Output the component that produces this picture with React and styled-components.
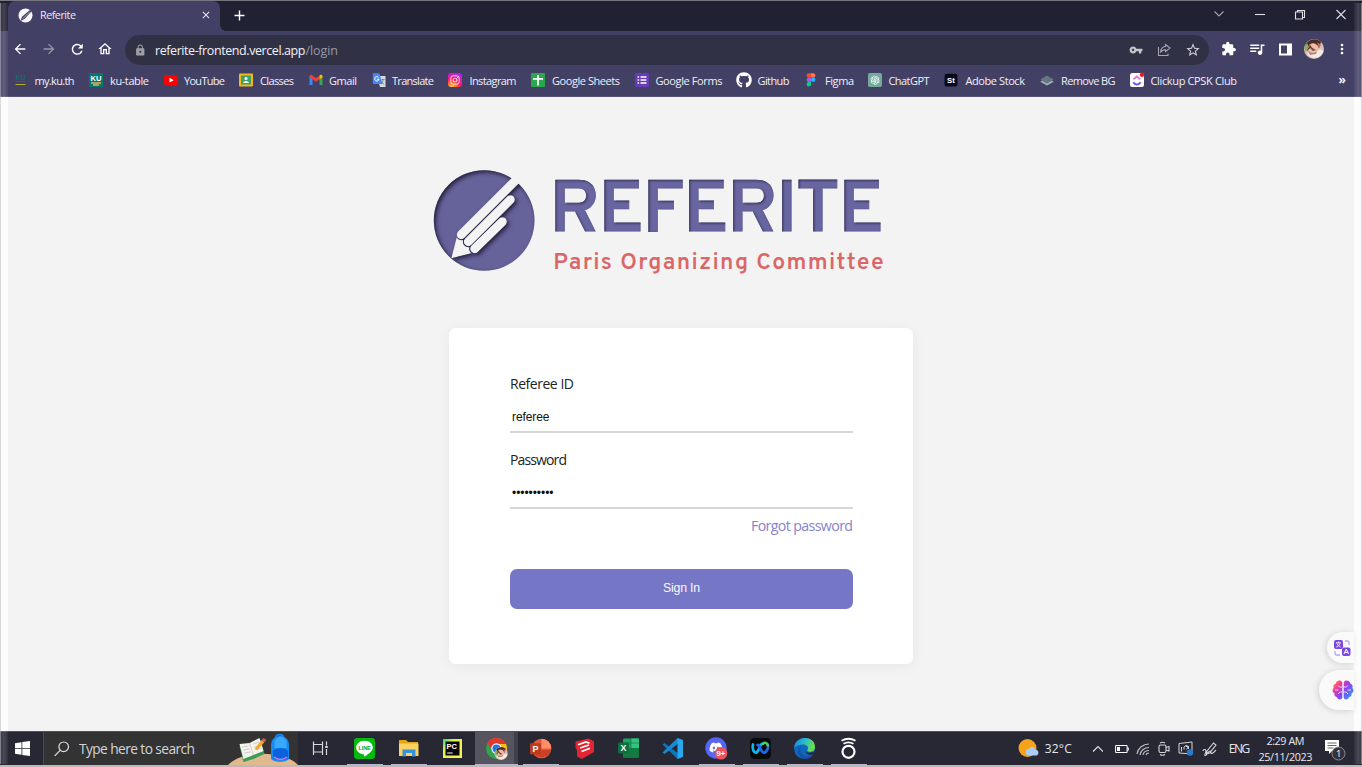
import React, { useLayoutEffect, useRef, useState } from "react";
import styled, { createGlobalStyle } from "styled-components";
import {
  MdArrowBack, MdArrowForward, MdRefresh, MdOutlineHome, MdLock, MdVpnKey,
  MdStarBorder, MdExtension, MdQueueMusic, MdMoreVert, MdClose, MdAdd,
} from "react-icons/md";
import { FaGithub, FaDiscord, FaInstagram } from "react-icons/fa";
import { AiOutlineOpenAI } from "react-icons/ai";

const GlobalStyle = createGlobalStyle`
  * { box-sizing: border-box; }
  html, body { margin: 0; padding: 0; overflow: hidden; }
  svg { display: block; flex: none; }
`;

const ui = `"Open Sans", "Noto Sans", sans-serif`;
const arial = `"Liberation Sans", Arial, sans-serif`;

/* Text whose tracking is adjusted so that it fills a given width. */
const FitBox = styled.span`
  display: inline-block;
  white-space: pre;
  width: ${(p) => p.$w}px;
  flex: none;
`;
function Fit({ w, children }) {
  const ref = useRef(null);
  const [tracking, setTracking] = useState(0);
  useLayoutEffect(() => {
    const natural = ref.current.getBoundingClientRect().width;
    setTracking((w - natural) / (String(children).length - 1));
  }, [w, children]);
  return (
    <FitBox $w={w}>
      <span ref={ref} style={{ letterSpacing: `${tracking}px` }}>{children}</span>
    </FitBox>
  );
}

/* ---------- window ---------- */
const Screen = styled.div`
  position: relative;
  width: 1362px;
  height: 767px;
  display: flex;
  flex-direction: column;
  overflow: hidden;
  font-family: ${ui};
  background: #f3f3f3;
  border-top: 1px solid #77767f;
`;
const Edge = styled.div`
  position: absolute;
  top: 2px;
  bottom: 3px;
  width: 8px;
  ${(p) => (p.$right ? "right: 0;" : "left: 0;")}
  background: linear-gradient(${(p) => (p.$right ? "90deg" : "270deg")},
    rgba(255,255,255,.04), rgba(255,255,255,.16) 55%, rgba(255,255,255,.08) 80%, rgba(190,190,198,.8) 100%);
`;
const PageEdge = styled.div`
  width: 8px;
  height: 100%;
  flex: none;
  background: #fdfdfd;
`;

/* ---------- title bar ---------- */
const TitleBar = styled.div`
  height: 30px;
  flex: none;
  display: flex;
  align-items: center;
  background: #212134;
  padding-left: 8px;
`;
const Tab = styled.div`
  position: relative;
  width: 212px;
  height: 30px;
  padding: 0 8px 2px 10px;
  display: flex;
  align-items: center;
  border-radius: 7px 7px 0 0;
  background: #434066;
  color: #e9e9f2;
  font-size: 10.8px;
  &::after {
    content: "";
    position: absolute;
    right: -6px;
    bottom: 0;
    width: 6px;
    height: 6px;
    background: radial-gradient(circle at 100% 0, transparent 5.6px, #434066 6px);
  }
  > span { margin-left: 7px; margin-right: auto; padding-bottom: 2px; }
`;
const NewTab = styled.div`
  margin-left: 11px;
  margin-bottom: 2px;
  width: 17px;
  color: #fff;
`;
const WindowControls = styled.div`
  margin-left: auto;
  margin-bottom: 4px;
  display: flex;
  svg { width: 41px; height: 14px; fill: none; stroke: #dedee4; stroke-width: 1.1; }
`;

/* ---------- toolbar ---------- */
const Toolbar = styled.div`
  height: 36px;
  flex: none;
  display: flex;
  align-items: center;
  padding-left: 6px;
  background: #434066;
  color: #fff;
`;
const NavButton = styled.span`
  width: 28.4px;
  display: flex;
  justify-content: center;
  opacity: ${(p) => (p.$dim ? 0.45 : 1)};
`;
const AddressBar = styled.div`
  width: 1084px;
  height: 30px;
  margin-left: 5.4px;
  margin-top: 2px;
  border-radius: 15px;
  background: #313146;
  display: flex;
  align-items: center;
  padding: 0 2px 0 9px;
  font-size: 12.5px;
  color: #f2f2f5;
  > svg { margin-right: 8.5px; color: #9d9da8; }
`;
const Path = styled.span`
  color: #9797a6;
  margin-right: auto;
`;
const ActionSlot = styled.span`
  width: 28.4px;
  display: flex;
  justify-content: center;
  color: ${(p) => p.$c || "#fff"};
`;
const Actions = styled.div`
  display: flex;
  align-items: center;
  margin-left: 5.5px;
`;

/* ---------- bookmarks ---------- */
const BookmarkBar = styled.div`
  height: 30px;
  flex: none;
  display: flex;
  align-items: center;
  padding: 0 0 3px 12px;
  background: #434066;
  border-bottom: 1px solid #56547a;
  color: #f0f0f6;
  font-size: 11px;
`;
const Bookmark = styled.div`
  width: ${(p) => p.$w}px;
  flex: none;
  display: flex;
  align-items: center;
`;
const BookmarkIcon = styled.span`
  width: ${(p) => p.$w}px;
  flex: none;
  svg { width: 16px; height: 16px; }
`;
const More = styled.span`
  margin-left: auto;
  margin-right: 16px;
  padding-bottom: 1px;
  font-size: 12px;
  font-weight: 700;
  line-height: 14px;
`;

/* ---------- login page ---------- */
const PageArea = styled.main`
  height: 634px;
  flex: none;
  display: flex;
  background: #f3f3f3;
`;
const Content = styled.div`
  position: relative;
  flex: 1;
  display: flex;
  flex-direction: column;
  padding: 58px 0 0 412px;
`;
const Card = styled.section`
  width: 464px;
  height: 336px;
  margin: 43px 0 0 29px;
  padding: 46px 60px 0 61px;
  border-radius: 7px;
  background: #fff;
  box-shadow: 0 2px 14px rgba(0, 0, 0, 0.05);
  display: flex;
  flex-direction: column;
`;
const Field = styled.div`
  height: 76px;
  flex: none;
  font-size: 14px;
  line-height: 20px;
  color: #222;
`;
const Value = styled.div`
  height: 39px;
  border-bottom: 2px solid #d6d6d6;
  padding: ${(p) => (p.$secret ? 11.5 : 12)}px 0 0 2px;
  font: 12px/22px ${arial};
  color: #111;
`;
const Forgot = styled.a`
  align-self: flex-end;
  font-size: 14.2px;
  line-height: 20px;
  margin-top: -10px;
  color: #8583cd;
`;
const SignIn = styled.button`
  height: 40px;
  flex: none;
  margin-top: 33px;
  padding: 0 0 2px;
  border: 0;
  border-radius: 7px;
  background: #7676c7;
  color: #f8f8ff;
  font: 12.3px ${arial};
`;
const Floating = styled.div`
  position: absolute;
  right: 0;
  bottom: ${(p) => p.$bottom}px;
  width: ${(p) => p.$w}px;
  height: ${(p) => p.$h}px;
  padding-left: ${(p) => p.$pad}px;
  border-radius: 20px 0 0 20px;
  background: #fafafa;
  box-shadow: -1px 1px 6px rgba(0, 0, 0, 0.14);
  display: flex;
  align-items: center;
`;

/* ---------- taskbar ---------- */
const Taskbar = styled.footer`
  height: 36px;
  flex: none;
  display: flex;
  background: #282734;
  border-top: 1px solid #50505b;
  border-bottom: 2px solid #b9b9be;
  color: #e7e7ea;
`;
const Start = styled.div`
  width: 43px;
  flex: none;
  padding-left: 15px;
  display: flex;
  align-items: center;
`;
const Search = styled.div`
  width: 255px;
  flex: none;
  background: #333334;
  border-left: 1px solid #4a4a4c;
  display: flex;
  align-items: center;
  padding-left: 10px;
  font-size: 13.8px;
  color: #d4d4d6;
  > span { margin: 0 auto 0 9px; }
`;
const TaskSlot = styled.div`
  position: relative;
  width: 44px;
  flex: none;
  display: flex;
  align-items: center;
  justify-content: center;
  &::before {
    content: "";
    position: absolute;
    z-index: 0;
    inset: 0 0 0 1px;
    background: ${(p) => (p.$active ? "linear-gradient(90deg, #55545f 39px, #403f4b 39px)" : "none")};
  }
  &::after {
    content: "";
    position: absolute;
    bottom: 0;
    left: ${(p) => (p.$active ? 1 : 5)}px;
    width: ${(p) => (p.$active ? 43 : 36)}px;
    height: 1.5px;
    background: ${(p) => (p.$open ? "#b7b3cb" : "none")};
  }
  svg { position: relative; z-index: 1; }
`;
const Tray = styled.div`
  margin-left: auto;
  width: 344.5px;
  flex: none;
  display: flex;
  align-items: center;
  font-size: 12px;
`;
const TraySlot = styled.span`
  width: ${(p) => p.$w}px;
  flex: none;
  display: flex;
  justify-content: center;
`;
const Clock = styled.div`
  width: 55px;
  flex: none;
  margin-left: -2px;
  display: flex;
  flex-direction: column;
  align-items: center;
  font-size: 10.8px;
  line-height: 16px;
`;

/* ---------- drawings ---------- */
const Favicon = () => (
  <svg width="15" height="15" viewBox="0 0 15 15">
    <circle cx="7.5" cy="7.5" r="7" fill="#f6f6fa" />
    <path d="M12.2 1.8 4 8.7 2.5 13 6.5 11 13.4 3.5z" fill="#434066" />
    <path d="M4.6 10.7 11.8 4" stroke="#b9b8ca" strokeWidth=".8" />
  </svg>
);

const marks = {
  ku: <svg viewBox="0 0 16 16"><text x="3.5" y="7.5" fontFamily="Liberation Sans" fontWeight="700" fontSize="7" fill="#0d6f6b">KU</text><path d="M3.5 9.5h10" stroke="#1f6a5e" /><path d="M3.5 12.500h10" stroke="#b8ac2c" /></svg>,
  kuTable: <svg viewBox="0 0 16 16"><rect x="1" y="1" width="14" height="14" fill="#08766c" /><text x="2.5" y="9" fontFamily="Liberation Sans" fontWeight="700" fontSize="8" textLength="11" lengthAdjust="spacingAndGlyphs" fill="#fff">KU</text><path d="M3 11h10M5 13h6" stroke="#d8b65e" strokeWidth="1.3" /></svg>,
  youtube: <svg viewBox="0 0 16 16"><rect x="1" y="3" width="14" height="10.5" rx="3" fill="#f00" /><path d="m6.5 5.8 4.2 2.4-4.2 2.4z" fill="#fff" /></svg>,
  classes: <svg viewBox="0 0 16 16"><rect x="1" y="1.5" width="14" height="13" rx="1" fill="#f3b91b" /><rect x="3" y="3.500" width="10" height="9" fill="#3fa162" /><circle cx="8" cy="6.500" r="1.500" fill="#fff" /><path d="M5 11c.5-2.800 5.500-2.800 6 0z" fill="#fff" /></svg>,
  gmail: <svg viewBox="0 0 16 16"><path d="M1.5 4v9h3V7z" fill="#4285f4" /><path d="M11.5 7v6h3V4z" fill="#34a853" /><path d="M1.5 4.6C1.5 2.5 3.5 2.4 4.5 3.4L8 6.2l3.5-2.8v3.7L8 9.8 1.5 5z" fill="#ea4335" /><path d="M11.5 3.4c1-1 3-.9 3 1.2v.6l-3 2.2z" fill="#fbbc04" /></svg>,
  translate: <svg viewBox="0 0 16 16"><path d="M6 4h8.5v11H9z" fill="#d7dbdf" /><path d="M1.8 1.3h6.5L11.6 12H1.8z" fill="#4887ee" /><path d="M7.8 5.6a2.2 2.2 0 1 0 .3 1.6H5.9" stroke="#fff" fill="none" /><path d="M10.5 7.5h3m-1.5 0c0 3-1 4-2 4.6m.5-2.6 2.5 3" stroke="#718289" fill="none" strokeWidth=".9" /></svg>,
  instagram: <svg viewBox="0 0 16 16"><defs><radialGradient id="ig" cx=".25" cy="1.05" r="1.1"><stop offset="0" stopColor="#fd5" /><stop offset=".28" stopColor="#ff7b23" /><stop offset=".58" stopColor="#ff176c" /><stop offset="1" stopColor="#ad24f2" /></radialGradient></defs><rect x="1" y="1" width="14" height="14" rx="3.2" fill="url(#ig)" /><FaInstagram x="2.8" y="2.8" style={{ width: 10.4, height: 10.4 }} color="#fff" /></svg>,
  sheets: <svg viewBox="0 0 16 16"><rect x="1" y="1" width="14" height="14" rx="1" fill="#29a84c" /><path d="M8 3v10.5M3 6.8h10" stroke="#fff" strokeWidth="1.7" /></svg>,
  forms: <svg viewBox="0 0 16 16"><rect x="1" y="1" width="14" height="14" rx="1" fill="#673ab7" /><path d="M6.500 5h6M6.500 8h6M6.500 11h6M3.600 5h1.500M3.600 8h1.500M3.600 11h1.500" stroke="#fff" strokeWidth="1.5" /></svg>,
  github: <FaGithub color="#fff" />,
  figma: <svg viewBox="0 0 16 16"><path d="M8 1.2H5.8a2.2 2.2 0 0 0 0 4.4H8z" fill="#f24e1e" /><path d="M8 1.2h2.2a2.2 2.2 0 0 1 0 4.4H8z" fill="#ff7262" /><path d="M8 5.6H5.8a2.2 2.2 0 0 0 0 4.4H8z" fill="#a259ff" /><circle cx="10.2" cy="7.8" r="2.2" fill="#1abcfe" /><path d="M8 10H5.8A2.2 2.2 0 1 0 8 12.4z" fill="#0acf83" /></svg>,
  chatgpt: <svg viewBox="0 0 16 16"><rect x="1" y="1" width="14" height="14" rx="1.8" fill="#75a99b" /><AiOutlineOpenAI x="2.2" y="2.2" style={{ width: 11.6, height: 11.6 }} color="#fff" /></svg>,
  stock: <svg viewBox="0 0 16 16"><rect x="1.5" y="1.8" width="13" height="12.8" rx="2.2" fill="#070b1e" /><text x="4" y="11" fontFamily="Liberation Sans" fontWeight="700" fontSize="7.8" fill="#fff">St</text></svg>,
  removeBg: <svg viewBox="0 0 16 16"><path d="m1.3 9.700 6.700 3.800 6.700-3.800-2-1.200L8 11.200 3.300 8.500z" fill="#a8b2b5" /><path d="m1.300 7.600 6.700-4 6.700 4-6.700 4z" fill="#64777d" /></svg>,
  clickup: <svg viewBox="0 0 16 16"><rect x="1" y="1" width="14" height="14" rx="2.500" fill="#fff" /><path d="m4.500 7.400 3.300-3 3.300 3" stroke="#e96bd0" fill="none" strokeWidth="1.800" /><path d="M4.200 10.200c2 3 5.400 3 7.400 0" stroke="#615cfa" fill="none" strokeWidth="2" /><circle cx="13" cy="2.800" r="2.200" fill="#f21a13" /></svg>,
};

/* label, icon, item width, text offset, text width */
const bookmarks = [
  ["my.ku.th", "ku", 76, 22.5, 40], ["ku-table", "kuTable", 75, 22, 39],
  ["YouTube", "youtube", 75, 21, 41], ["Classes", "classes", 70, 22, 34],
  ["Gmail", "gmail", 62.5, 21, 28], ["Translate", "translate", 76.5, 21.5, 42],
  ["Instagram", "instagram", 83, 22.5, 47], ["Google Sheets", "sheets", 103.5, 22, 68],
  ["Google Forms", "forms", 102, 22, 67], ["Github", "github", 67.5, 22, 32],
  ["Figma", "figma", 64, 22, 29], ["ChatGPT", "chatgpt", 76, 21.5, 41],
  ["Adobe Stock", "stock", 96, 22.5, 59.5], ["Remove BG", "removeBg", 90, 22, 54.5],
  ["Clickup CPSK Club", "clickup", 112, 21.5, 86.5],
];

const Portrait = ({ x = 0, y = 0, r = 10 }) => (
  <g transform={`translate(${x} ${y}) scale(${r / 10})`}>
    <circle cx="10" cy="10" r="10" fill="#dcbfb4" />
    <path d="M1.5 5.5A10 10 0 0 1 17 3l-2 6-4-2-4 1-4 4z" fill="#4b2a25" />
    <path d="M.2 9 3 4l2 4-3 5z" fill="#8fae5d" />
    <path d="M5 6c3-3 7-2 9 1s-1 5-3 5-5-2-6-6z" fill="#efbba5" />
    <path d="M6 5c1 3 3 5 6 6l-3 1-4-4z" fill="#7b4436" />
    <path d="M3 15c4-4 9 0 13-5l3.500 2c-2 7-11 10-16.500 3z" fill="#f4e9e4" />
    <path d="M4 12c4 2 6 2 9 0l-1 3-6 1z" fill="#b9806f" />
    <path d="m13 3 4 3-2 3z" fill="#c96a66" />
  </g>
);

const Logo = () => (
  <svg width="480" height="130" viewBox="0 0 480 130">
    <defs>
      <filter id="inset" x="-5%" y="-5%" width="110%" height="110%" colorInterpolationFilters="sRGB">
        <feComponentTransfer in="SourceAlpha" result="inverse"><feFuncA type="linear" slope="-1" intercept="1" /></feComponentTransfer>
        <feOffset in="inverse" dx="1.1" dy="1.3" />
        <feGaussianBlur stdDeviation="1" result="soft" />
        <feFlood floodColor="#1c1a38" floodOpacity=".75" />
        <feComposite in2="soft" operator="in" />
        <feComposite in2="SourceAlpha" operator="in" result="shade" />
        <feMerge><feMergeNode in="SourceGraphic" /><feMergeNode in="shade" /></feMerge>
      </filter>
      <filter id="insetDeep" x="-5%" y="-5%" width="110%" height="110%" colorInterpolationFilters="sRGB">
        <feComponentTransfer in="SourceAlpha" result="inverse"><feFuncA type="linear" slope="-1" intercept="1" /></feComponentTransfer>
        <feOffset in="inverse" dx="2" dy="2" />
        <feGaussianBlur stdDeviation="1.900" result="soft" />
        <feFlood floodColor="#15142c" floodOpacity=".85" />
        <feComposite in2="soft" operator="in" />
        <feComposite in2="SourceAlpha" operator="in" result="shade" />
        <feMerge><feMergeNode in="SourceGraphic" /><feMergeNode in="shade" /></feMerge>
      </filter>
      <mask id="pencil" maskUnits="userSpaceOnUse" x="0" y="0" width="400" height="400">
        <rect width="400" height="400" fill="#fff" />
        <path d="M94 310 112 240 166 292z" fill="#000" />
        <g strokeLinecap="round">
          <path d="M164 281 247 200" stroke="#fff" strokeWidth="33" />
          <path d="M145 260 271 134" stroke="#fff" strokeWidth="33" />
          <path d="M124 239 310 53" stroke="#fff" strokeWidth="33" />
          <path d="M164 281 247 200" stroke="#000" strokeWidth="27" />
          <path d="M145 260 271 134" stroke="#000" strokeWidth="27" />
          <path d="M124 239 310 53" stroke="#000" strokeWidth="27" />
        </g>
      </mask>
    </defs>
    <g filter="url(#insetDeep)">
      <g transform="scale(.33333)"><circle cx="192.5" cy="196.5" r="151" fill="#66629a" mask="url(#pencil)" /></g>
    </g>
    <g filter="url(#inset)">
      <text transform="translate(129.3 76.2) scale(1.04 1)" fontFamily="Overpass, Inter, sans-serif" fontWeight="600" fontSize="71.5" textLength="322" lengthAdjust="spacing" fill="#6965a0" stroke="#6965a0" strokeWidth=".8">REFERITE</text>
    </g>
    <text x="133.300" y="113.5" fontFamily="Overpass, Roboto, sans-serif" fontWeight="600" fontSize="23" textLength="330.500" lengthAdjust="spacing" fill="#da6668">Paris Organizing Committee</text>
  </svg>
);

const Brain = () => (
  <svg width="22" height="22" viewBox="0 0 22 22">
    <defs>
      <linearGradient id="brain" x1="0" y1=".1" x2="1" y2=".9">
        <stop stopColor="#ff9a2e" /><stop offset=".25" stopColor="#f03c9c" /><stop offset=".55" stopColor="#8a43f0" /><stop offset="1" stopColor="#24a6ff" />
      </linearGradient>
    </defs>
    <path fill="url(#brain)" d="M10.300 3.200v15.600c-.8 2.200-4.600 2.200-5.200-.600-2.200-.200-3.200-2.200-2.400-3.800C.3 13.500-.2 10.500 1.700 9 .8 7 1.800 5 3.700 4.700 4 1.500 9 .400 10.300 3.200zM11.700 3.200v15.600c.8 2.200 4.600 2.200 5.200-.600 2.200-.200 3.200-2.200 2.400-3.800 2.400-.900 2.900-3.900 1-5.400.9-2-.1-4-2-4.300-.3-3.200-5.300-4.300-6.600-1.500z" />
    <path d="M10 8H7.500L6 6.500M10 13H8l-2 2M3 11h3.500M12 8h2.500L16 6.500M12 13h2l2 2M19 11h-3.500" stroke="#fff" strokeWidth=".9" fill="none" opacity=".85" />
  </svg>
);

const SearchArt = () => (
  <svg width="70" height="33" viewBox="0 0 70 33">
    <path d="M0 33C14 18 56 18 70 33z" fill="#e0b98e" />
    <g transform="translate(1.5 0)">
      <path d="m10 14 10-2 11-4 4 14-11 5-10 3z" fill="#3c9b55" />
      <path d="m10 12 10-1 10-5 4 13-10 4-10 4z" fill="#f5f3ee" />
      <path d="m20 11 4 12M13 15l6-1m-5 4 6-1m-5 4 6-1m3-8 6-2m-5 5 6-2m-5 5 6-2" stroke="#bbb" strokeWidth=".7" />
      <path d="m25 17 7-9 3 2-7 8z" fill="#f7a531" /><path d="m32 8 2-2 3 2-2 2z" fill="#e85450" />
      <path d="M46 6c0-4.500 8-4.500 8 0" stroke="#168af2" strokeWidth="1.6" fill="none" />
      <path d="M41.500 26V13c0-12 18-12 18 0v13c0 5-18 5-18 0z" fill="#168af2" />
      <path d="M45 9c3-6 9-6 12 0v7H45z" fill="#38a9ff" />
      <path d="M43.500 19c4-4 11-4 15 0v7c-4 3-11 3-15 0z" fill="#0a62dd" />
      <path d="M44.500 25c4 3 9 3 13 0" stroke="#d678f0" strokeWidth="1.5" fill="none" />
    </g>
  </svg>
);

const apps = [
  { id: "tasks", art: <g stroke="#d8d8dc" fill="none" strokeWidth="1.2"><path d="M4.500 4.500v3h9v-3M4.500 18v-3h9v3M4.500 7.500v7.500M13.500 7.500v7.500M17.500 4.500v4M17.500 12v6" /><path d="M17.500 9v2" strokeWidth="2.5" /></g> },
  { id: "line", open: true, art: <><rect x="1" y="1" width="21" height="21" rx="3" fill="#06b90e" /><path d="M11.500 3.800c5 0 8.300 2.900 8.300 6.600 0 3.400-3.800 6.200-8 8.900-.6.3-.9.1-.8-.5l.2-1.500c-4.700-.3-8-3.100-8-6.900 0-3.700 3.600-6.600 8.300-6.600z" fill="#fff" /><text x="5.600" y="12.700" fontFamily="Liberation Sans" fontWeight="700" fontSize="5.500" textLength="12" fill="#06a90e">LINE</text></> },
  { id: "files", open: true, art: <><path d="M2 3h7l2 2h10v13H2z" fill="#e7a616" /><path d="M2 6.500h19.500V19H2z" fill="#fbd361" /><path d="M5.500 19.500v-7h13v7h-3.500V16H9v3.500z" fill="#3992dc" /></> },
  { id: "pycharm", art: <><defs><linearGradient id="pc" x2="1" y2="1"><stop stopColor="#1bdd8e" /><stop offset=".3" stopColor="#ddf052" /><stop offset="1" stopColor="#f5f456" /></linearGradient></defs><rect x="2" y="2" width="19" height="19" fill="url(#pc)" /><rect x="4.500" y="4.500" width="14" height="14" fill="#060606" /><text x="5.500" y="11.500" fontFamily="Liberation Sans" fontWeight="700" fontSize="7.500" fill="#fff">PC</text><path d="M6.200 16h5.500" stroke="#fff" /></> },
  { id: "chrome", open: true, active: true, art: <><circle cx="11.500" cy="11.500" r="10.500" fill="#31a350" /><path d="M2.500 6A10.500 10.500 0 0 1 21 7h-9.500z" fill="#e5382d" /><path d="M11.500 7H21a10.500 10.500 0 0 1-9.500 15l4-8z" fill="#fbc01a" /><path d="M2.500 6a10.500 10.500 0 0 1 9-5v8l-4 5z" fill="#e5382d" /><circle cx="11.500" cy="11.500" r="5.200" fill="#fff" /><circle cx="11.500" cy="11.500" r="4" fill="#2274e8" /><Portrait x={9.500} y={9.800} r={6.600} /></> },
  { id: "powerpoint", open: true, art: <><circle cx="12.500" cy="11.500" r="9.800" fill="#e35a38" /><path d="M12.500 1.700a9.800 9.800 0 0 1 9.800 9.800h-9.800z" fill="#ff8f6b" /><path d="M3 13h19a9.800 9.800 0 0 1-19 0z" fill="#cc4026" /><rect x="1" y="6.200" width="11" height="11" rx="1" fill="#bd3b1e" /><text x="3.600" y="15" fontFamily="Liberation Sans" fontWeight="700" fontSize="9" fill="#fff">P</text></> },
  { id: "sketchup", art: <><path d="m2.500 4.500 13-3 5.500 3V15L9 22l-5-2.500V13L2.500 11z" fill="#e32431" /><path d="M5 7.800 13 5l3.500 1.200M7 11l9-3M8.500 14.500l8.500-3.300" stroke="#fff" strokeWidth="1.700" fill="none" /></> },
  { id: "excel", art: <><rect x="6" y="1.500" width="16" height="19" rx="1" fill="#20a366" /><path d="M14 1.500h8v9.500h-8z" fill="#33c481" /><path d="M6 11h16v9.500H6z" fill="#107c41" /><path d="M6 6h16M6 15.500h16M14 1.500v19" stroke="#187746" strokeWidth=".7" /><rect x="1" y="5.500" width="11" height="11" rx="1" fill="#0d703c" /><text x="3.500" y="14.200" fontFamily="Liberation Sans" fontWeight="700" fontSize="8.800" fill="#fff">X</text></> },
  { id: "code", art: <><path d="M1.500 7.500 3.500 6 22 20l-5.500 2z" fill="#0877bf" /><path d="M1.500 15.500 3.500 17 22 3l-5.500-2z" fill="#128bd2" /><path d="m16.500 1 5.500 2.200v16.600L16.500 22z" fill="#29a8ee" /></> },
  { id: "discord", open: true, art: <><circle cx="11" cy="11" r="10.700" fill="#5865f2" /><FaDiscord x="4" y="3.500" width="14" height="14" size={14} color="#fff" /><circle cx="16" cy="16.200" r="6.300" fill="#ed5459" /><text x="11.400" y="19" fontFamily="Liberation Sans" fontWeight="700" fontSize="7.800" fill="#fff">9+</text></> },
  { id: "webex", open: true, art: <><rect x="1" y="1" width="21" height="21" rx="4.500" fill="#080b0b" /><path d="M4 7.500c-1.500 4 1 9 3.500 8 2.700-1 3-8.500 6-8.800" stroke="#12b4ef" fill="none" strokeWidth="2.700" strokeLinecap="round" /><path d="M8.500 8c2-2 3 8 6.500 7.700 3-.2 5-6 3.500-8.500" stroke="#2765ed" fill="none" strokeWidth="2.700" strokeLinecap="round" /><path d="M14 6.800c2-2 4-1 4.800 1.500" stroke="#4ccf60" fill="none" strokeWidth="2.500" strokeLinecap="round" /></> },
  { id: "edge", open: true, art: <><defs><linearGradient id="edge" x2="1" y2=".3"><stop stopColor="#1b7bd0" /><stop offset=".5" stopColor="#27b9d2" /><stop offset="1" stopColor="#69dd52" /></linearGradient></defs><circle cx="11.500" cy="11.500" r="10.500" fill="#0e68bf" /><path d="M1 11C2-2 22-2 22 10c0 5-6 6-8 3.500 3-3.500-1-6.500-5-6-4 .300-7 2-8 3.500z" fill="url(#edge)" /><path d="M8.500 9c-3 4 0 10 5 10 3 0 5-1 6.500-2-2 3-5 5-8.500 5C4 21 3 10.500 8.500 9z" fill="#1553a5" /><path d="M12.500 11.500c-1.500 3 2 5.500 7.500 3.500l2.500 1.500c-5 2.500-11.500 1.500-10-5z" fill="#282734" /></> },
  { id: "cast", open: true, art: <g fill="none" stroke="#fff" strokeWidth="2.200"><circle cx="11.500" cy="14.800" r="6" /><path d="M6.500 6.800c3-1.800 7-1.800 10 0M4.500 3.800c4.500-2.600 9.500-2.600 14 0" strokeWidth="1.800" /></g> },
];

export default function App() {
  return (
    <Screen>
      <GlobalStyle />
      <TitleBar>
        <Tab>
          <Favicon />
          <Fit w={36}>Referite</Fit>
          <MdClose size={12} />
        </Tab>
        <NewTab><MdAdd size={17} /></NewTab>
        <WindowControls>
          <svg viewBox="0 0 41 14"><path d="m16.500 4.500 4.500 4.500 4.500-4.500" stroke="#a5a5b0" /></svg>
          <svg viewBox="0 0 41 14"><path d="M16 7.500h10" /></svg>
          <svg viewBox="0 0 41 14"><path d="M15.500 5h7v7h-7zM17.500 5V3.500h7V10.500h-2" /></svg>
          <svg viewBox="0 0 41 14"><path d="m15.500 3 9 9m0-9-9 9" /></svg>
        </WindowControls>
      </TitleBar>
      <Toolbar>
        <NavButton><MdArrowBack size={16} /></NavButton>
        <NavButton $dim><MdArrowForward size={16} /></NavButton>
        <NavButton><MdRefresh size={16.5} /></NavButton>
        <NavButton><MdOutlineHome size={16} /></NavButton>
        <AddressBar>
          <MdLock size={12.5} />
          <Fit w={150.5}>referite-frontend.vercel.app</Fit>
          <Path><Fit w={32.5}>/login</Fit></Path>
          <ActionSlot $c="#c5c5cc"><MdVpnKey size={14} /></ActionSlot>
          <ActionSlot>
            <svg width="14" height="14" viewBox="0 0 14 14" fill="none" stroke="#a5a5af" strokeWidth="1.1"><path d="M1.5 4v8.500h9.500v-2M8.500 1.500 13 5 8.500 8.700V6.700C6 6.500 4.500 7.500 3.500 9.500 3.700 6 5.500 3.800 8.500 3.500z" /></svg>
          </ActionSlot>
          <ActionSlot $c="#d0d0d6"><MdStarBorder size={16} /></ActionSlot>
        </AddressBar>
        <Actions>
          <ActionSlot><MdExtension size={15.5} /></ActionSlot>
          <ActionSlot><MdQueueMusic size={18} /></ActionSlot>
          <ActionSlot><svg width="13" height="13" viewBox="0 0 13 13"><path d="M0 .5h13v12H0zM2 2.500v8h6v-8z" fill="#fff" fillRule="evenodd" /></svg></ActionSlot>
          <ActionSlot><svg width="20" height="20" viewBox="0 0 20 20"><Portrait /></svg></ActionSlot>
          <ActionSlot><MdMoreVert size={16} /></ActionSlot>
        </Actions>
      </Toolbar>
      <BookmarkBar>
        {bookmarks.map(([label, icon, w, offset, textWidth]) => (
          <Bookmark key={label} $w={w}>
            <BookmarkIcon $w={offset}>{marks[icon]}</BookmarkIcon>
            <Fit w={textWidth}>{label}</Fit>
          </Bookmark>
        ))}
        <More>»</More>
      </BookmarkBar>
      <PageArea>
        <PageEdge />
        <Content>
          <Logo />
          <Card>
            <Field>
              <Fit w={64}>Referee ID</Fit>
              <Value><Fit w={37.5}>referee</Fit></Value>
            </Field>
            <Field>
              <Fit w={57}>Password</Fit>
              <Value $secret><Fit w={41.5}>••••••••••</Fit></Value>
            </Field>
            <Forgot><Fit w={102}>Forgot password</Fit></Forgot>
            <SignIn><Fit w={37}>Sign In</Fit></SignIn>
          </Card>
          <Floating $bottom={68} $w={27} $h={31} $pad={6}>
            <svg width="18" height="18" viewBox="0 0 18 18">
              <rect x="1" y="1" width="9" height="9" rx="2" fill="#7c49df" />
              <path d="M3 3.800h5M5.500 2.500v1.300M4 4.500c1 2.300 2 3 3.500 3.500M7 4.500C6 6.800 5 7.500 3.300 8" stroke="#fff" fill="none" strokeWidth=".9" />
              <rect x="9" y="8.500" width="8.500" height="8.500" rx="2" fill="#7c49df" />
              <path d="m11 15 2.300-5 2.300 5m-4-1.700h3.300" stroke="#fff" fill="none" />
              <path d="M12 2h2.500q1.500 0 1.500 2v2M2 12v2q0 2 2 2h3" stroke="#bba4ea" fill="none" strokeWidth="1.3" />
            </svg>
          </Floating>
          <Floating $bottom={21} $w={35} $h={40} $pad={12.5}>
            <Brain />
          </Floating>
        </Content>
        <PageEdge />
      </PageArea>
      <Taskbar>
        <Start><svg width="15" height="15" viewBox="0 0 15 15"><path d="M0 2.200 6.500 1.200V7H0zM7.300 1.100 15 0v7H7.300zM0 7.800h6.500v6L0 12.800zM7.300 7.800H15V15l-7.700-1.100z" fill="#fff" /></svg></Start>
        <Search>
          <svg width="16" height="16" viewBox="0 0 16 16" fill="none" stroke="#e0e0e2" strokeWidth="1.2"><circle cx="9.7" cy="5.8" r="4.8" /><path d="m6.200 9.300-5.500 5.500" /></svg>
          <Fit w={116}>Type here to search</Fit>
          <SearchArt />
        </Search>
        {apps.map((app) => (
          <TaskSlot key={app.id} $open={app.open} $active={app.active}>
            <svg width="23" height="23" viewBox="0 0 23 23">{app.art}</svg>
          </TaskSlot>
        ))}
        <Tray>
          <svg width="21" height="21" viewBox="0 0 21 21"><circle cx="9.5" cy="10" r="9" fill="#f6a21b" /><path d="M11 17.500a3.300 3.300 0 0 1 0-6.600c1-3 5.500-2.600 6 .6 4.500 0 4.500 6 .5 6z" fill="#a9cdf5" /></svg>
          <TraySlot $w={39.5}><Fit w={27}>32°C</Fit></TraySlot>
          <TraySlot $w={36.5}><svg width="14" height="10" viewBox="0 0 14 10"><path d="m4 7.500 5-5 5 5" stroke="#dfdfe3" fill="none" strokeWidth="1.2" /></svg></TraySlot>
          <svg width="14" height="10" viewBox="0 0 14 10"><path d="M.6 1.500h11.500v7H.6zM12.100 3.800h1.200v2.500h-1.200" fill="none" stroke="#fff" /><path d="M2 3h3v4H2z" fill="#fff" /></svg>
          <TraySlot $w={28.5}><svg width="14" height="14" viewBox="0 0 14 14" fill="none" stroke="#bbbbc1"><path d="M1 12C2 6 7 2 13 2M4 13c.5-4 4-7.500 9-7.500M7 13c.5-2.500 3-4.500 6-4.500M10 13q.5-2 3-2" strokeWidth="1.2" /></svg></TraySlot>
          <svg width="14" height="15" viewBox="0 0 14 15" fill="none" stroke="#d5d5d8" strokeWidth="1.1"><rect x="2" y="4" width="7" height="7.500" rx="1.5" /><path d="m9 6.500 3-1v4.500l-3-1M3 2q2.500-1.500 5 0M3 13.500q2.500 1.500 5 0" /></svg>
          <TraySlot $w={29}><svg width="16" height="15" viewBox="0 0 16 15" fill="none" stroke="#d5d5d8"><path d="M1 2.500 14 1v12L1 12zM3.500 10.500V6M6 8.500V6q2-3 4.500-.5l-2 3M8 5.500h2.500V8" /><circle cx="12" cy="11.500" r="3.200" fill="#287bd0" stroke="none" /></svg></TraySlot>
          <TraySlot $w={19}><svg width="16" height="16" viewBox="0 0 16 16" fill="none" stroke="#dadade" strokeWidth="1.1"><path d="m5 10 6.500-8 2.500 2-6.500 8-3 1zM1 10c0-2 3-2 3 0s-2 4-1 4.500c2 .5 3-5 5-4.500s0 3 2 2.500 3-2.500 4-3.500" /></svg></TraySlot>
          <TraySlot $w={41}><Fit w={21.5}>ENG</Fit></TraySlot>
          <Clock><Fit w={38}>2:29 AM</Fit><Fit w={54}>25/11/2023</Fit></Clock>
          <TraySlot $w={42}>
            <svg width="23" height="24" viewBox="0 0 23 24"><path d="M2 3h14v11H9l-3 3v-3H2z" fill="#fff" /><path d="M4.500 6h9M4.500 8.500h9M4.500 11h6" stroke="#555" strokeWidth=".9" /><circle cx="15.5" cy="16.5" r="6.5" fill="#323238" stroke="#86868c" /><text x="13" y="20" fontFamily="Open Sans" fontSize="9.5" fill="#fff">1</text></svg>
          </TraySlot>
        </Tray>
      </Taskbar>
      <Edge />
      <Edge $right />
    </Screen>
  );
}
